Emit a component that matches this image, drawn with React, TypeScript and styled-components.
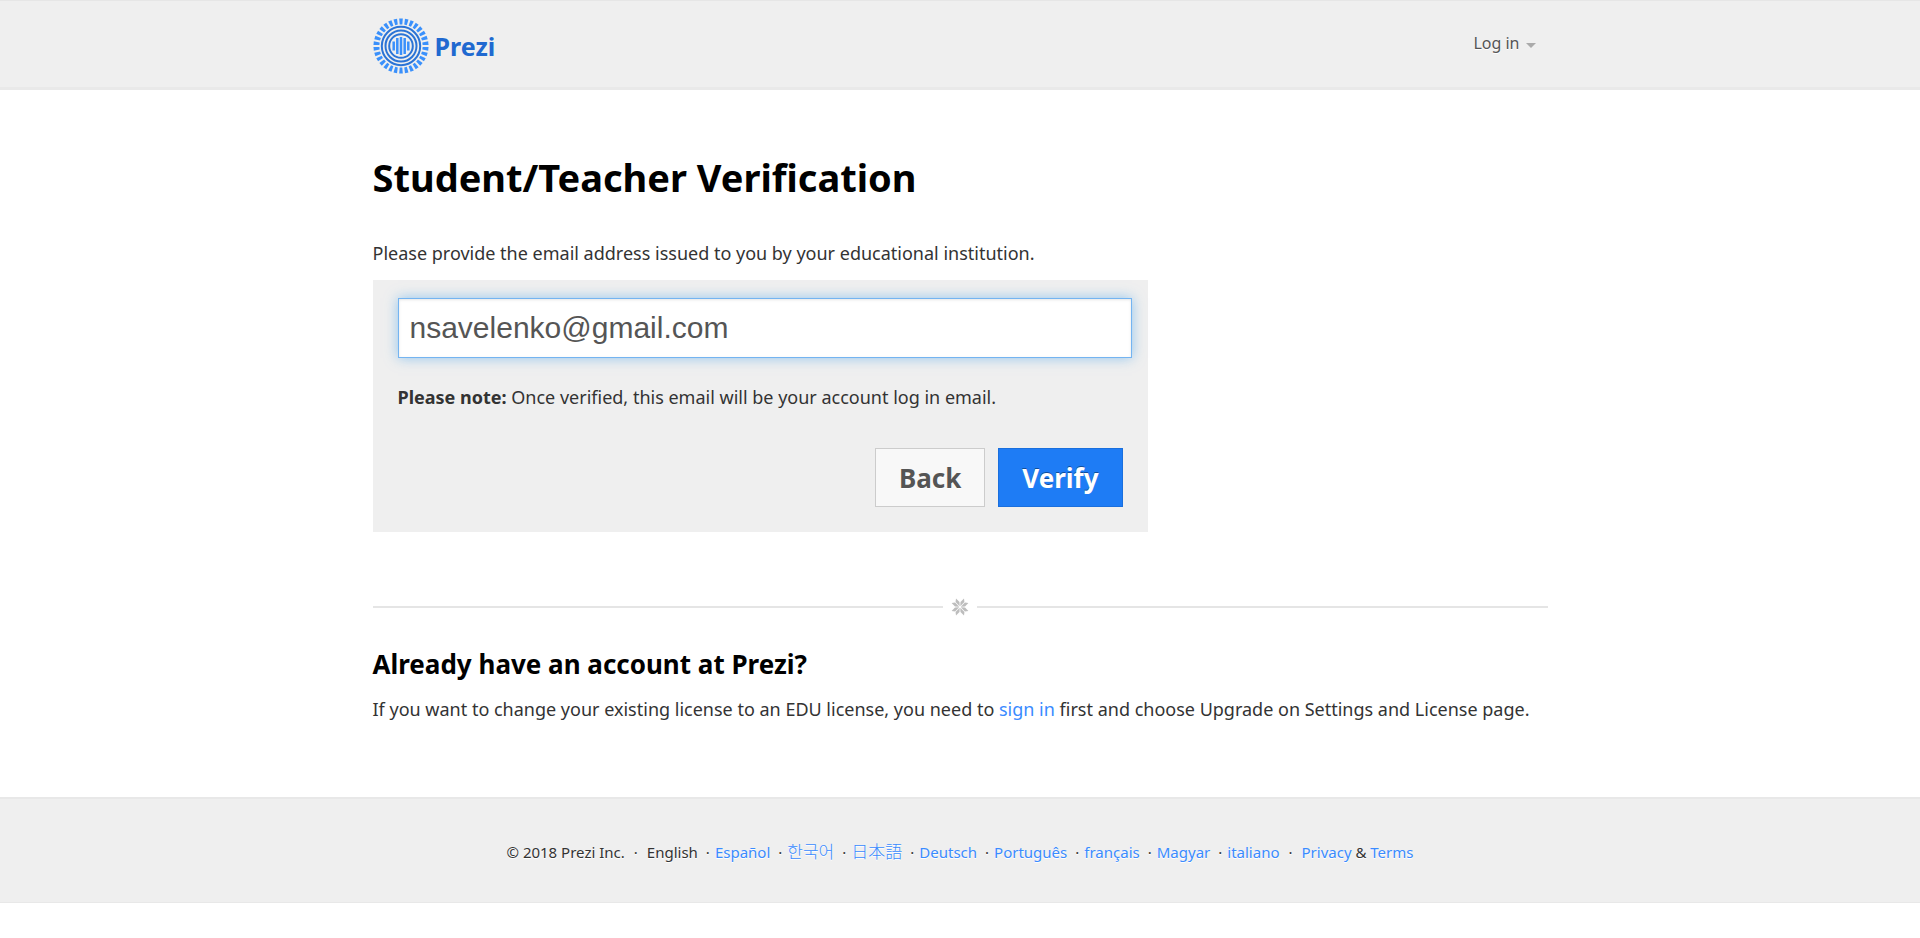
import React from "react";
import styled, { createGlobalStyle } from "styled-components";

const GlobalStyle = createGlobalStyle`
  * {
    box-sizing: border-box;
  }

  body {
    margin: 0;
    background: #fff;
    color: #333;
    font-family: "Noto Sans", "Noto Sans CJK KR", "Noto Sans CJK JP", sans-serif;
    font-size: 18px;
    line-height: 28px;
  }
`;

const Container = styled.div`
  width: 100%;
  max-width: 1175px;
  margin: 0 auto;
`;

const Header = styled.header`
  background: #efefef;
  border-top: 1px solid #e6e6e6;
  border-bottom: 3px solid #e9e9e9;
`;

const HeaderRow = styled(Container)`
  display: flex;
  align-items: flex-start;
  justify-content: space-between;
  padding: 17px 12px 13px 0;
`;

const LogoLink = styled.a`
  display: flex;
  align-items: center;
  gap: 6px;
  color: #2069d0;
  font-size: 25px;
  font-weight: 700;
  text-decoration: none;
`;

const LoginButton = styled.button`
  display: flex;
  align-items: center;
  gap: 6px;
  margin-top: 11px;
  padding: 0;
  border: 0;
  background: none;
  color: #555;
  font-family: inherit;
  font-size: 16px;
  line-height: 28px;
  text-shadow: 0 1px 0 #fff;
  cursor: pointer;
`;

const Caret = styled.span`
  margin-top: 4px;
  border: 5px solid transparent;
  border-top-color: #aaa;
  border-bottom-width: 0;
`;

const Main = styled(Container).attrs({ as: "main" })`
  padding-top: 55px;
  padding-bottom: 74px;
`;

const Title = styled.h1`
  margin: 0;
  color: #000;
  font-size: 38px;
  font-weight: 700;
  line-height: 64px;
`;

const Paragraph = styled.p`
  margin: 0;
`;

const Intro = styled.label`
  display: block;
  margin-top: 30px;
`;

const Panel = styled.form`
  max-width: 775px;
  margin-top: 13px;
  padding: 18px 16px 25px 25px;
  background: #efefef;
`;

const EmailInput = styled.input`
  display: block;
  width: 100%;
  height: 60px;
  padding: 0 11px;
  border: 1px solid #74b4f1;
  border-radius: 0;
  outline: 0;
  background: #fff;
  box-shadow: inset 0 1px 3px rgba(0, 0, 0, 0.1), 0 0 12px rgba(82, 168, 236, 0.6);
  color: #555;
  font-family: "Liberation Sans", Arial, sans-serif;
  font-size: 30px;
`;

const Note = styled(Paragraph)`
  margin-top: 25px;
`;

const Actions = styled.div`
  display: flex;
  justify-content: flex-end;
  gap: 13px;
  margin-top: 37px;
  padding-right: 9px;
`;

const Button = styled.button<{ $primary?: boolean }>`
  height: 59px;
  padding: 0 23px;
  border: 1px solid ${(p) => (p.$primary ? "#1a6fdd" : "#ccc")};
  background: ${(p) => (p.$primary ? "#1e7cf5" : "#f8f8f8")};
  color: ${(p) => (p.$primary ? "#fff" : "#555")};
  font-family: inherit;
  font-size: 26px;
  font-weight: 700;
  text-shadow: ${(p) => (p.$primary ? "0 -1px 0 rgba(0, 0, 0, 0.4)" : "0 1px 0 #fff")};
  cursor: pointer;
`;

const Divider = styled.div`
  display: flex;
  align-items: center;
  gap: 8px;
  margin-top: 66px;

  &::before,
  &::after {
    content: "";
    flex: 1;
    height: 2px;
    background: #e5e5e5;
  }
`;

const Subtitle = styled.h2`
  margin: 30px 0 13px;
  color: #000;
  font-size: 26px;
  font-weight: 700;
  line-height: 36px;
`;

const TextLink = styled.a`
  color: #3a8bff;
  text-decoration: none;
`;

const Footer = styled.footer`
  padding: 39px 0 36px;
  border-top: 2px solid #e8e8e8;
  border-bottom: 1px solid #e8e8e8;
  background: #efefef;
  font-size: 15px;
  text-shadow: 0 1px 0 #fff;
`;

const FooterRow = styled(Container)`
  display: flex;
  flex-wrap: wrap;
  justify-content: center;
  gap: 9px;
`;

const Languages = styled.ul`
  display: flex;
  flex-wrap: wrap;
  gap: 8px;
  margin: 0;
  padding: 0;
  list-style: none;

  li + li::before {
    content: "·";
    margin-right: 5px;
  }

  :lang(ko),
  :lang(ja) {
    font-size: 17px;
    font-weight: 300;
    line-height: 20px;
  }
`;

const languages = [
  { code: "en", name: "English" },
  { code: "es", name: "Español" },
  { code: "ko", name: "한국어" },
  { code: "ja", name: "日本語" },
  { code: "de", name: "Deutsch" },
  { code: "pt", name: "Português" },
  { code: "fr", name: "français" },
  { code: "hu", name: "Magyar" },
  { code: "it", name: "italiano" },
];

const rays = Array.from({ length: 30 }, (_, i) => i * 12);

const LogoMark = () => (
  <svg width="56" height="56" viewBox="-28 -28 56 56" aria-hidden="true">
    <g fill="#3a90fb">
      {rays.map((angle) => (
        <path key={angle} d="M-1.3 -21.6L-1.8 -27.5H1.8L1.3 -21.6Z" transform={`rotate(${angle})`} />
      ))}
    </g>
    <g fill="none" stroke="#2b74d6" strokeWidth="2">
      <circle r="19.2" />
      <circle r="15.5" />
      <circle r="11.8" />
    </g>
    <path
      d="M-7.3 -4.5V4.5M-3.7 -8V8M0 -9V9M3.7 -8V8M7.3 -4.5V4.5"
      stroke="#3a90fb"
      strokeWidth="2.5"
    />
  </svg>
);

const Star = () => (
  <svg width="18" height="18" viewBox="-9 -9 18 18" aria-hidden="true">
    {[0, 90, 180, 270].map((angle) => (
      <g key={angle} transform={`rotate(${angle})`} fill="#bdbdbd">
        <path d="M-0.3 -0.8L-0.5 -5L-4 -8.4L-4.4 -4.9Z" />
        <path d="M0.3 -0.8L0.5 -5L4 -8.4L4.4 -4.9Z" />
      </g>
    ))}
  </svg>
);

export default function App() {
  return (
    <>
      <GlobalStyle />
      <Header>
        <HeaderRow>
          <LogoLink href="#">
            <LogoMark />
            Prezi
          </LogoLink>
          <LoginButton type="button">
            Log in
            <Caret />
          </LoginButton>
        </HeaderRow>
      </Header>
      <Main>
        <Title>Student/Teacher Verification</Title>
        <Intro htmlFor="email">
          Please provide the email address issued to you by your educational institution.
        </Intro>
        <Panel onSubmit={(e) => e.preventDefault()}>
          <EmailInput id="email" type="email" defaultValue="nsavelenko@gmail.com" />
          <Note>
            <strong>Please note:</strong> Once verified, this email will be your account log in
            email.
          </Note>
          <Actions>
            <Button type="button">Back</Button>
            <Button type="submit" $primary>
              Verify
            </Button>
          </Actions>
        </Panel>
        <Divider>
          <Star />
        </Divider>
        <Subtitle>Already have an account at Prezi?</Subtitle>
        <Paragraph>
          If you want to change your existing license to an EDU license, you need to{" "}
          <TextLink href="#">sign in</TextLink> first and choose Upgrade on Settings and License
          page.
        </Paragraph>
      </Main>
      <Footer>
        <FooterRow>
          <span>© 2018 Prezi Inc.</span>
          <span>·</span>
          <Languages>
            {languages.map(({ code, name }) => (
              <li key={code}>
                {code === "en" ? (
                  name
                ) : (
                  <TextLink href="#" lang={code}>
                    {name}
                  </TextLink>
                )}
              </li>
            ))}
          </Languages>
          <span>·</span>
          <span>
            <TextLink href="#">Privacy</TextLink> & <TextLink href="#">Terms</TextLink>
          </span>
        </FooterRow>
      </Footer>
    </>
  );
}
